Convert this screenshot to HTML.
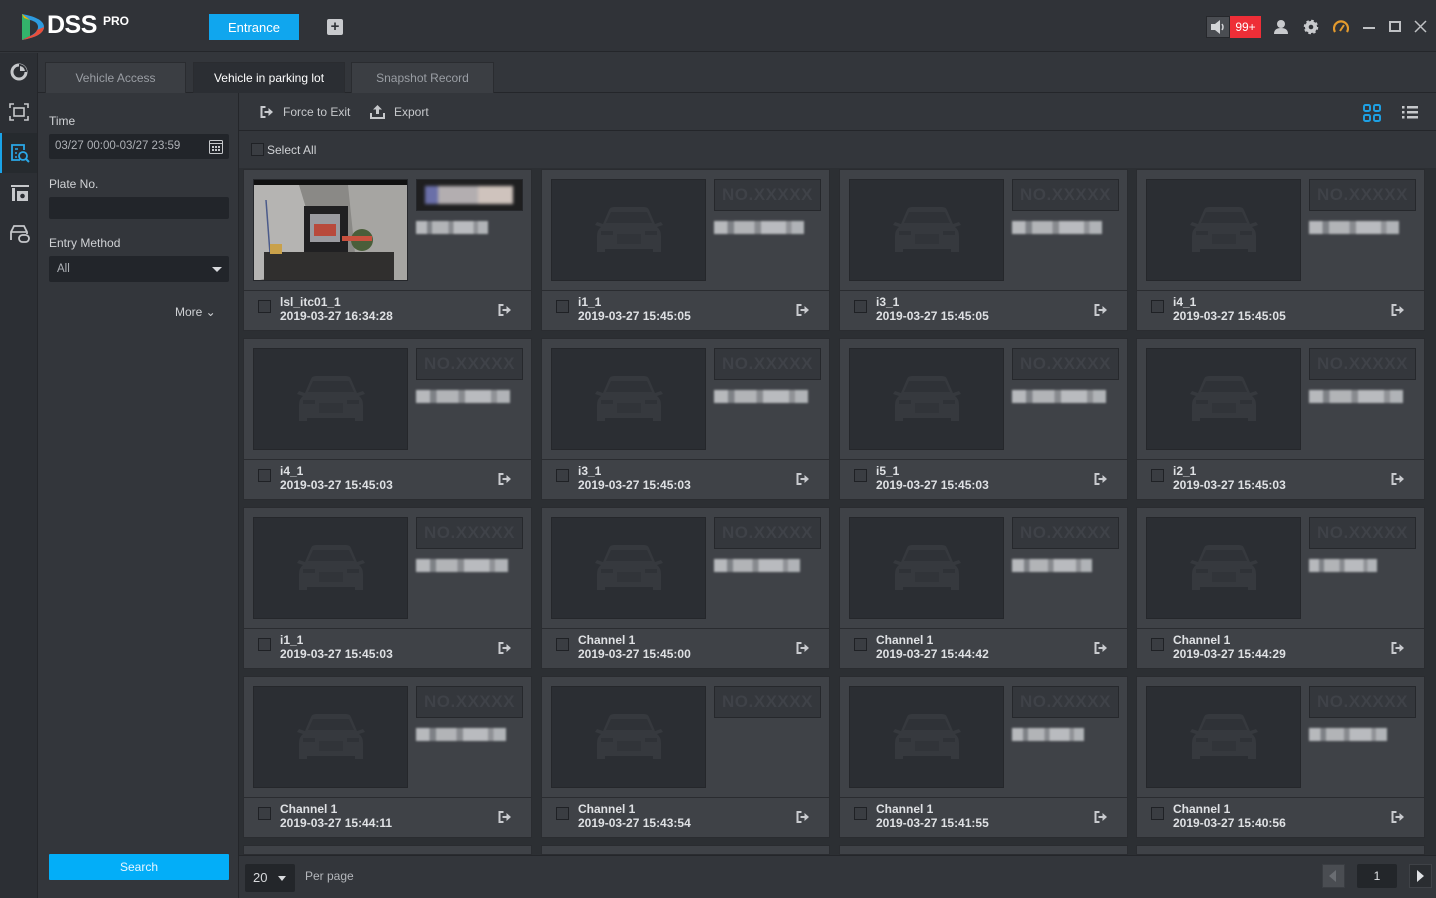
<!DOCTYPE html>
<html style="width:1436px;height:898px;overflow:hidden"><head><meta charset="utf-8">
<style>
*{margin:0;padding:0;box-sizing:border-box}
body{width:1436px;height:898px;overflow:hidden;background:#33363b;font-family:"Liberation Sans",sans-serif;position:relative;color:#d8dadd}
.abs{position:absolute}
#top{left:0;top:0;width:1436px;height:52px;background:#303338;border-bottom:1px solid #24262a}
#icons{left:0;top:53px;width:38px;height:845px;background:#2c2f34;border-right:1px solid #24262a}
#tabsrow{left:38px;top:53px;width:1398px;height:40px;background:#33363b;border-bottom:1px solid #24262a}
.tab{position:absolute;top:9px;height:31px;background:#3b3e43;border:1px solid #2a2c30;border-bottom:none;color:#9a9ea4;font-size:12px;text-align:center;line-height:31px}
#filter{left:38px;top:93px;width:201px;height:805px;background:#33363b;border-right:1px solid #24262a}
.lbl{position:absolute;left:11px;font-size:12px;color:#d0d2d5}
.inp{position:absolute;left:11px;width:180px;height:22px;background:#22252a;border-radius:2px;font-size:11.5px;color:#aeb1b6;line-height:22px;padding-left:8px}
#main{left:239px;top:93px;width:1197px;height:805px;background:#2c2f33}
#toolbar{left:239px;top:93px;width:1197px;height:38px;background:#33363b;border-bottom:1px solid #24262a}
.card{position:absolute;width:289px;height:162px;background:#3f4247;border:1px solid #2a2c30;overflow:hidden}
.pic{position:absolute;left:9px;top:9px;width:155px;height:102px;background:#2b2e33;border:1px solid #25272b;overflow:hidden}
.plate{position:absolute;left:172px;top:9px;width:107px;height:32px;background:#34373c;border:1px solid #26282c;color:#3f4248;font-size:17px;font-weight:bold;text-align:center;line-height:30px;letter-spacing:0.5px}
.blur{position:absolute;left:172px;top:51px;width:76px;height:13px;background:linear-gradient(90deg,#d5d7da 0 15%,#8e9196 15% 22%,#cfd1d4 22% 45%,#9a9ca0 45% 52%,#d8dadd 52% 80%,#a4a6aa 80% 86%,#cdd0d3 86%);filter:blur(1px);opacity:.8}
.foot{position:absolute;left:0;top:120px;width:287px;height:40px;border-top:1px solid #2a2c30}
.cb{position:absolute;left:14px;top:9px;width:13px;height:13px;border:1px solid #1f2125;background:#3a3d42}
.nm{position:absolute;left:36px;top:4px;font-size:12px;font-weight:bold;color:#dfe1e4;line-height:14px;white-space:nowrap}
.ex{position:absolute;left:253px;top:12px}
#bottom{left:239px;top:855px;width:1197px;height:43px;background:#33363b;border-top:1px solid #24262a}
</style></head><body>
<svg width="0" height="0" style="position:absolute"><defs>
<symbol id="car" viewBox="0 0 80 52"><path d="M14 20 L20 6 Q21 3 25 3 L55 3 Q59 3 60 6 L66 20 L72 18 L74 21 L68 23 Q72 26 72 32 L72 48 L64 48 L64 45 L16 45 L16 48 L8 48 L8 32 Q8 26 12 23 L6 21 L8 18 Z" fill="#36393e"/><path d="M22 8 L58 8 L63 19 L17 19 Z" fill="#2f3237"/><rect x="12" y="27" width="12" height="4" fill="#2f3237"/><rect x="56" y="27" width="12" height="4" fill="#2f3237"/><rect x="28" y="30" width="24" height="10" fill="#313439"/></symbol>
<symbol id="exit" viewBox="0 0 14 14"><path d="M1 1 H6 V3 H3 V11 H6 V13 H1 Z" fill="#c9cbcf"/><path d="M5 6 H9 V3 L13.5 7 L9 11 V8 H5 Z" fill="#c9cbcf"/></symbol>
</defs></svg>

<div id="top" class="abs">
  <svg class="abs" style="left:20px;top:12px" width="26" height="30" viewBox="0 0 26 30"><path d="M2 2 L2 28 L10 24 L10 8 Z" fill="#33b36b"/><path d="M2 2 Q24 6 24 15 Q24 24 2 28 L10 24 Q18 20 18 15 Q18 10 10 8 Z" fill="#2d9be0"/><path d="M2 28 L10 24 Q16 22 17 18 L24 15 Q24 24 2 28Z" fill="#e94e3b"/><path d="M2 2 L10 8 L4 6Z" fill="#f5b400"/></svg>
  <div class="abs" style="left:47px;top:11px;font-size:25px;font-weight:bold;color:#fff;letter-spacing:-0.5px">DSS</div>
  <div class="abs" style="left:103px;top:14px;font-size:12px;font-weight:bold;color:#fff">PRO</div>
  <div class="abs" style="left:209px;top:14px;width:90px;height:26px;background:#10a6ee;color:#fff;font-size:13px;text-align:center;line-height:27px">Entrance</div>
  <div class="abs" style="left:327px;top:19px;width:16px;height:16px;background:#c8cacd;border-radius:2px;color:#303338;font-weight:bold;font-size:15px;line-height:16px;text-align:center">+</div>
  <div class="abs" style="left:1206px;top:16px;width:24px;height:22px;background:#4a4d52;border:1px solid #26282c"><svg width="22" height="20" viewBox="0 0 22 20"><path d="M4 7 H8 L13 3 V17 L8 13 H4Z" fill="#d3d5d8"/><path d="M15 7 Q17 10 15 13" stroke="#d3d5d8" stroke-width="1.5" fill="none"/></svg></div>
  <div class="abs" style="left:1230px;top:16px;width:31px;height:22px;background:#ee2e37;color:#fff;font-size:12px;text-align:center;line-height:22px">99+</div>
  <svg class="abs" style="left:1273px;top:19px" width="16" height="16" viewBox="0 0 16 16"><circle cx="8" cy="5" r="4" fill="#c8cacd"/><path d="M1 15 Q1 9 8 9 Q15 9 15 15Z" fill="#c8cacd"/></svg>
  <svg class="abs" style="left:1303px;top:19px" width="16" height="16" viewBox="0 0 16 16"><circle cx="8" cy="8" r="6" fill="#c8cacd" stroke="#c8cacd" stroke-width="2.5" stroke-dasharray="2.5 2.2"/><circle cx="8" cy="8" r="2.3" fill="#303338"/></svg>
  <svg class="abs" style="left:1333px;top:20px" width="16" height="14" viewBox="0 0 16 14"><path d="M2 12 A7 7 0 1 1 14 12" stroke="#e39a2d" stroke-width="2.2" fill="none"/><path d="M7 11 L11 5" stroke="#e39a2d" stroke-width="2"/></svg>
  <div class="abs" style="left:1363px;top:27px;width:12px;height:2px;background:#bfc1c4"></div>
  <div class="abs" style="left:1389px;top:21px;width:12px;height:11px;border:2px solid #bfc1c4"></div>
  <svg class="abs" style="left:1414px;top:20px" width="13" height="13" viewBox="0 0 13 13"><path d="M1 1 L12 12 M12 1 L1 12" stroke="#bfc1c4" stroke-width="1.5"/></svg>
</div>

<div id="icons" class="abs">
  <svg class="abs" style="left:10px;top:10px" width="18" height="18" viewBox="0 0 18 18"><circle cx="9" cy="9" r="7" fill="none" stroke="#c6c8cb" stroke-width="3"/><path d="M9 9 L9 1 A8 8 0 0 1 17 9Z" fill="#2c2f34"/><path d="M10 8 L10 3 A6 6 0 0 1 15 8Z" fill="#c6c8cb"/></svg>
  <svg class="abs" style="left:9px;top:50px" width="20" height="18" viewBox="0 0 20 18"><path d="M1 5 V1 H5 M15 1 H19 V5 M19 13 V17 H15 M5 17 H1 V13" stroke="#c6c8cb" stroke-width="1.6" fill="none"/><rect x="5" y="5" width="10" height="8" fill="none" stroke="#c6c8cb" stroke-width="1.6"/></svg>
  <div class="abs" style="left:0;top:80px;width:37px;height:40px;background:#262a2e"></div>
  <div class="abs" style="left:0;top:80px;width:2px;height:40px;background:#1aa3e8"></div>
  <svg class="abs" style="left:10px;top:90px" width="21" height="21" viewBox="0 0 21 21"><path d="M10 17 H2 V2 H14 V7" stroke="#2aa8e8" stroke-width="1.8" fill="none"/><circle cx="13" cy="13" r="4" stroke="#2aa8e8" stroke-width="1.8" fill="none"/><path d="M16 16 L19 19" stroke="#2aa8e8" stroke-width="2"/><path d="M5 6 H8 M5 10 H7 M5 14 H7" stroke="#2aa8e8" stroke-width="1.5"/></svg>
  <svg class="abs" style="left:10px;top:130px" width="20" height="20" viewBox="0 0 20 20"><path d="M1 3 H19" stroke="#c6c8cb" stroke-width="2"/><rect x="2" y="5" width="3" height="13" fill="#c6c8cb"/><rect x="7" y="8" width="11" height="10" fill="#c6c8cb"/><circle cx="12.5" cy="13" r="2.3" fill="#2c2f34"/></svg>
  <svg class="abs" style="left:9px;top:171px" width="22" height="20" viewBox="0 0 22 20"><path d="M2 16 V8 L5 2 H15 L18 8 V10" stroke="#c6c8cb" stroke-width="1.8" fill="none"/><path d="M2 8 H17" stroke="#c6c8cb" stroke-width="1.6"/><rect x="10" y="11" width="10" height="7" rx="3.5" fill="none" stroke="#c6c8cb" stroke-width="1.8"/></svg>
</div>

<div id="tabsrow" class="abs">
  <div class="tab" style="left:7px;width:141px">Vehicle Access</div>
  <div class="tab" style="left:155px;width:152px;background:#2b2e33;color:#fff">Vehicle in parking lot</div>
  <div class="tab" style="left:313px;width:143px">Snapshot Record</div>
</div>

<div id="filter" class="abs">
  <div class="lbl" style="top:21px">Time</div>
  <div class="inp" style="top:41px;height:25px;line-height:25px;padding-left:6px">03/27 00:00-03/27 23:59</div>
  <svg class="abs" style="left:171px;top:47px" width="14" height="14" viewBox="0 0 14 14"><rect x="0.5" y="0.5" width="13" height="13" rx="1" fill="none" stroke="#c6c8cb"/><path d="M0.5 3.5 H13.5" stroke="#c6c8cb"/><rect x="3" y="6" width="2" height="2" fill="#c6c8cb"/><rect x="6" y="6" width="2" height="2" fill="#c6c8cb"/><rect x="9" y="6" width="2" height="2" fill="#c6c8cb"/><rect x="3" y="9" width="2" height="2" fill="#c6c8cb"/><rect x="6" y="9" width="2" height="2" fill="#c6c8cb"/><rect x="9" y="9" width="2" height="2" fill="#c6c8cb"/></svg>
  <div class="lbl" style="top:84px">Plate No.</div>
  <div class="inp" style="top:104px"></div>
  <div class="lbl" style="top:143px">Entry Method</div>
  <div class="inp" style="top:163px;height:26px;line-height:26px">All</div>
  <div class="abs" style="left:174px;top:174px;width:0;height:0;border-left:5px solid transparent;border-right:5px solid transparent;border-top:5px solid #d8dadd"></div>
  <div class="abs" style="left:137px;top:212px;font-size:12px;color:#cfd1d4">More &#8964;</div>
  <div class="abs" style="left:11px;top:761px;width:180px;height:26px;background:#03aef8;color:#e8f6ff;font-size:12px;text-align:center;line-height:27px;border-radius:1px">Search</div>
</div>

<div id="main" class="abs"></div>
<div id="toolbar" class="abs">
  <svg class="abs" style="left:20px;top:12px" width="15" height="14"><use href="#exit"/></svg>
  <div class="abs" style="left:44px;top:12px;font-size:12px;color:#c6c8cb">Force to Exit</div>
  <svg class="abs" style="left:131px;top:11px" width="15" height="15" viewBox="0 0 15 15"><path d="M7.5 1 L12 5.5 H9 V10 H6 V5.5 H3Z" fill="#c6c8cb"/><path d="M1 9 V14 H14 V9" stroke="#c6c8cb" stroke-width="2" fill="none"/></svg>
  <div class="abs" style="left:155px;top:12px;font-size:12px;color:#c6c8cb">Export</div>
  <svg class="abs" style="left:1124px;top:11px" width="18" height="18" viewBox="0 0 18 18"><g fill="none" stroke="#1ea0e3" stroke-width="2"><rect x="1" y="1" width="6" height="6" rx="1.5"/><rect x="11" y="1" width="6" height="6" rx="1.5"/><rect x="1" y="11" width="6" height="6" rx="1.5"/><rect x="11" y="11" width="6" height="6" rx="1.5"/></g></svg>
  <svg class="abs" style="left:1163px;top:12px" width="16" height="15" viewBox="0 0 16 15"><g fill="#c6c8cb"><rect x="0" y="1" width="2.5" height="2.5"/><rect x="0" y="6" width="2.5" height="2.5"/><rect x="0" y="11" width="2.5" height="2.5"/><rect x="5" y="1" width="11" height="2.5"/><rect x="5" y="6" width="11" height="2.5"/><rect x="5" y="11" width="11" height="2.5"/></g></svg>
</div>
<div class="abs" style="left:239px;top:131px;width:1197px;height:37px;background:#33363b"></div>
<div class="abs" style="left:251px;top:143px;width:13px;height:13px;border:1px solid #1f2125;background:#3a3d42"></div>
<div class="abs" style="left:267px;top:143px;font-size:12px;color:#d0d2d5">Select All</div>

<!-- row 1 -->
<div class="card" style="left:243px;top:169px"><div class="pic">
<svg width="155" height="102" viewBox="0 0 155 102"><rect width="155" height="102" fill="#8a8986"/><rect y="0" width="155" height="5" fill="#111"/><path d="M0 5 L45 5 L52 28 L52 85 L0 102Z" fill="#b5b4b2"/><path d="M12 20 L18 100" stroke="#4a5a8a" stroke-width="1.5"/><rect x="50" y="26" width="44" height="50" fill="#202022"/><rect x="56" y="34" width="30" height="28" fill="#9a9ba0"/><rect x="60" y="44" width="22" height="12" fill="#b84a3c"/><path d="M94 5 L155 5 L155 102 L104 102Z" fill="#a6a5a2"/><rect x="10" y="72" width="130" height="30" fill="#302f2e"/><circle cx="108" cy="60" r="11" fill="#4a5e3a"/><rect x="88" y="56" width="30" height="5" fill="#c8503e"/><rect x="16" y="64" width="12" height="10" fill="#c9a14a"/></svg></div>
<div class="plate" style="background:#1f1f20"><div style="position:absolute;left:8px;top:6px;width:88px;height:18px;background:linear-gradient(90deg,#6a6fa8 0 15%,#b3aeb0 15% 60%,#cfc3bd 60%);filter:blur(1.5px)"></div></div><div class="blur" style="width:72px"></div>
<div class="foot"><div class="cb"></div><div class="nm">lsl_itc01_1<br>2019-03-27 16:34:28</div><svg class="ex" width="15" height="14"><use href="#exit"/></svg></div></div>

<div class="card" style="left:541px;top:169px"><div class="pic"><svg style="position:absolute;left:37px;top:24px" width="80" height="52"><use href="#car"/></svg></div><div class="plate">NO.XXXXX</div><div class="blur" style="width:90px"></div><div class="foot"><div class="cb"></div><div class="nm">i1_1<br>2019-03-27 15:45:05</div><svg class="ex" width="15" height="14"><use href="#exit"/></svg></div></div>
<div class="card" style="left:839px;top:169px"><div class="pic"><svg style="position:absolute;left:37px;top:24px" width="80" height="52"><use href="#car"/></svg></div><div class="plate">NO.XXXXX</div><div class="blur" style="width:90px"></div><div class="foot"><div class="cb"></div><div class="nm">i3_1<br>2019-03-27 15:45:05</div><svg class="ex" width="15" height="14"><use href="#exit"/></svg></div></div>
<div class="card" style="left:1136px;top:169px"><div class="pic"><svg style="position:absolute;left:37px;top:24px" width="80" height="52"><use href="#car"/></svg></div><div class="plate">NO.XXXXX</div><div class="blur" style="width:90px"></div><div class="foot"><div class="cb"></div><div class="nm">i4_1<br>2019-03-27 15:45:05</div><svg class="ex" width="15" height="14"><use href="#exit"/></svg></div></div>

<!-- row 2 -->
<div class="card" style="left:243px;top:338px"><div class="pic"><svg style="position:absolute;left:37px;top:24px" width="80" height="52"><use href="#car"/></svg></div><div class="plate">NO.XXXXX</div><div class="blur" style="width:94px"></div><div class="foot"><div class="cb"></div><div class="nm">i4_1<br>2019-03-27 15:45:03</div><svg class="ex" width="15" height="14"><use href="#exit"/></svg></div></div>
<div class="card" style="left:541px;top:338px"><div class="pic"><svg style="position:absolute;left:37px;top:24px" width="80" height="52"><use href="#car"/></svg></div><div class="plate">NO.XXXXX</div><div class="blur" style="width:94px"></div><div class="foot"><div class="cb"></div><div class="nm">i3_1<br>2019-03-27 15:45:03</div><svg class="ex" width="15" height="14"><use href="#exit"/></svg></div></div>
<div class="card" style="left:839px;top:338px"><div class="pic"><svg style="position:absolute;left:37px;top:24px" width="80" height="52"><use href="#car"/></svg></div><div class="plate">NO.XXXXX</div><div class="blur" style="width:94px"></div><div class="foot"><div class="cb"></div><div class="nm">i5_1<br>2019-03-27 15:45:03</div><svg class="ex" width="15" height="14"><use href="#exit"/></svg></div></div>
<div class="card" style="left:1136px;top:338px"><div class="pic"><svg style="position:absolute;left:37px;top:24px" width="80" height="52"><use href="#car"/></svg></div><div class="plate">NO.XXXXX</div><div class="blur" style="width:94px"></div><div class="foot"><div class="cb"></div><div class="nm">i2_1<br>2019-03-27 15:45:03</div><svg class="ex" width="15" height="14"><use href="#exit"/></svg></div></div>

<!-- row 3 -->
<div class="card" style="left:243px;top:507px"><div class="pic"><svg style="position:absolute;left:37px;top:24px" width="80" height="52"><use href="#car"/></svg></div><div class="plate">NO.XXXXX</div><div class="blur" style="width:92px"></div><div class="foot"><div class="cb"></div><div class="nm">i1_1<br>2019-03-27 15:45:03</div><svg class="ex" width="15" height="14"><use href="#exit"/></svg></div></div>
<div class="card" style="left:541px;top:507px"><div class="pic"><svg style="position:absolute;left:37px;top:24px" width="80" height="52"><use href="#car"/></svg></div><div class="plate">NO.XXXXX</div><div class="blur" style="width:86px"></div><div class="foot"><div class="cb"></div><div class="nm">Channel 1<br>2019-03-27 15:45:00</div><svg class="ex" width="15" height="14"><use href="#exit"/></svg></div></div>
<div class="card" style="left:839px;top:507px"><div class="pic"><svg style="position:absolute;left:37px;top:24px" width="80" height="52"><use href="#car"/></svg></div><div class="plate">NO.XXXXX</div><div class="blur" style="width:80px"></div><div class="foot"><div class="cb"></div><div class="nm">Channel 1<br>2019-03-27 15:44:42</div><svg class="ex" width="15" height="14"><use href="#exit"/></svg></div></div>
<div class="card" style="left:1136px;top:507px"><div class="pic"><svg style="position:absolute;left:37px;top:24px" width="80" height="52"><use href="#car"/></svg></div><div class="plate">NO.XXXXX</div><div class="blur" style="width:68px"></div><div class="foot"><div class="cb"></div><div class="nm">Channel 1<br>2019-03-27 15:44:29</div><svg class="ex" width="15" height="14"><use href="#exit"/></svg></div></div>

<!-- row 4 -->
<div class="card" style="left:243px;top:676px"><div class="pic"><svg style="position:absolute;left:37px;top:24px" width="80" height="52"><use href="#car"/></svg></div><div class="plate">NO.XXXXX</div><div class="blur" style="width:90px"></div><div class="foot"><div class="cb"></div><div class="nm">Channel 1<br>2019-03-27 15:44:11</div><svg class="ex" width="15" height="14"><use href="#exit"/></svg></div></div>
<div class="card" style="left:541px;top:676px"><div class="pic"><svg style="position:absolute;left:37px;top:24px" width="80" height="52"><use href="#car"/></svg></div><div class="plate">NO.XXXXX</div><div class="foot"><div class="cb"></div><div class="nm">Channel 1<br>2019-03-27 15:43:54</div><svg class="ex" width="15" height="14"><use href="#exit"/></svg></div></div>
<div class="card" style="left:839px;top:676px"><div class="pic"><svg style="position:absolute;left:37px;top:24px" width="80" height="52"><use href="#car"/></svg></div><div class="plate">NO.XXXXX</div><div class="blur" style="width:72px"></div><div class="foot"><div class="cb"></div><div class="nm">Channel 1<br>2019-03-27 15:41:55</div><svg class="ex" width="15" height="14"><use href="#exit"/></svg></div></div>
<div class="card" style="left:1136px;top:676px"><div class="pic"><svg style="position:absolute;left:37px;top:24px" width="80" height="52"><use href="#car"/></svg></div><div class="plate">NO.XXXXX</div><div class="blur" style="width:78px"></div><div class="foot"><div class="cb"></div><div class="nm">Channel 1<br>2019-03-27 15:40:56</div><svg class="ex" width="15" height="14"><use href="#exit"/></svg></div></div>

<!-- partial row -->
<div class="card" style="left:243px;top:845px;height:10px"></div>
<div class="card" style="left:541px;top:845px;height:10px"></div>
<div class="card" style="left:839px;top:845px;height:10px"></div>
<div class="card" style="left:1136px;top:845px;height:10px"></div>

<div id="bottom" class="abs">
  <div class="abs" style="left:6px;top:8px;width:50px;height:28px;background:#23262a;border-radius:2px;font-size:13px;color:#d8dadd;line-height:28px;padding-left:8px">20</div>
  <div class="abs" style="left:39px;top:20px;width:0;height:0;border-left:4px solid transparent;border-right:4px solid transparent;border-top:5px solid #d8dadd"></div>
  <div class="abs" style="left:66px;top:13px;font-size:12px;color:#b4b7bb">Per page</div>
  <div class="abs" style="left:1083px;top:8px;width:23px;height:24px;background:#4a4d52;border:1px solid #3a3d42"></div>
  <div class="abs" style="left:1090px;top:14px;width:0;height:0;border-top:6px solid transparent;border-bottom:6px solid transparent;border-right:7px solid #6a6d72"></div>
  <div class="abs" style="left:1118px;top:8px;width:40px;height:24px;background:#23262a;border-radius:2px;font-size:12px;color:#e0e2e5;text-align:center;line-height:24px">1</div>
  <div class="abs" style="left:1170px;top:8px;width:23px;height:24px;background:#2a2d31;border:1px solid #3f4247"></div>
  <div class="abs" style="left:1178px;top:14px;width:0;height:0;border-top:6px solid transparent;border-bottom:6px solid transparent;border-left:7px solid #e0e2e5"></div>
</div>
</body></html>
